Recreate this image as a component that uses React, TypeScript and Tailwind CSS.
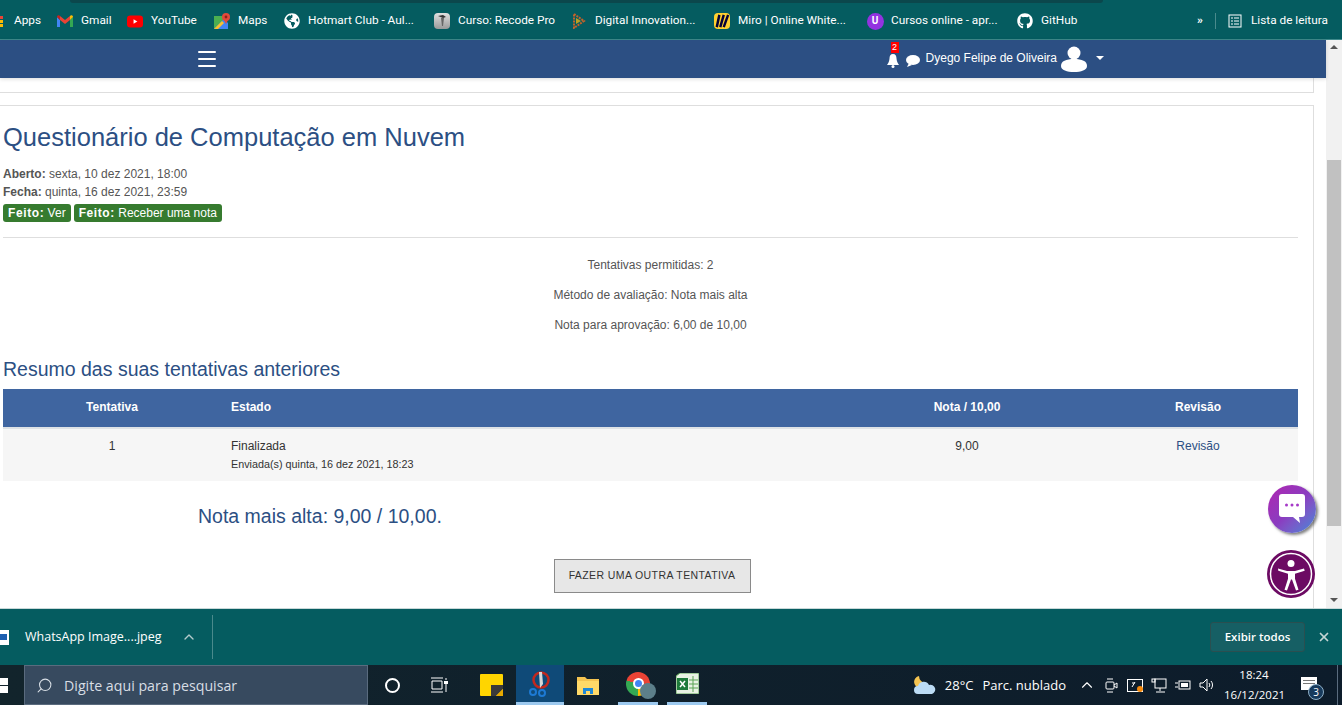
import { Menu, ChevronUp, X, Search } from 'lucide-react'
import { FaGithub, FaGlobeAmericas } from 'react-icons/fa'

const sans = "font-['Liberation_Sans',Arial,sans-serif]"

function GmailIcon() {
  return (
    <svg viewBox="0 0 16 12" className="w-4 h-3">
      <path d="M0 2v10h3V5z" fill="#4285f4" />
      <path d="M13 5v7h3V2z" fill="#34a853" />
      <path d="M3 5l5 4 5-4V1l-5 4-5-4z" fill="#ea4335" />
      <path d="M0 2l3 3V1L2 .3C1 -.2 0 .6 0 2z" fill="#c5221f" />
      <path d="M13 1v4l3-3c0-1.400-1-2.200-2-1.700z" fill="#fbbc04" />
    </svg>
  )
}

function YoutubeIcon() {
  return (
    <svg viewBox="0 0 17 13" className="w-[17px] h-[13px]">
      <rect width="17" height="13" rx="3.500" fill="#ff0000" />
      <path d="M7 4l4 2.500L7 9z" fill="white" />
    </svg>
  )
}

function MapsIcon() {
  return (
    <svg viewBox="0 0 16 16" className="w-4 h-4">
      <path d="M0 3h10v13H0z" fill="#4caf50" />
      <path d="M0 16L10 6l4 4v6z" fill="#4285f4" />
      <path d="M0 16l8-8 2 2-6 6z" fill="#fbc02d" />
      <circle cx="12" cy="4" r="4" fill="#e24a3b" />
      <path d="M9.500 6l2.500 5 2.500-5z" fill="#e24a3b" />
      <circle cx="12" cy="4" r="1.400" fill="#8e2118" />
    </svg>
  )
}

function RecodeIcon() {
  return (
    <div className="w-[16px] h-[16px] rounded-sm bg-gradient-to-b from-[#e0e0e0] to-[#9a9a9a] flex items-start justify-center pt-[2px]">
      <svg viewBox="0 0 8 12" className="w-[8px] h-[12px]">
        <path d="M0 1l5-1 3 2-3 1z" fill="#333" />
        <path d="M3 3h3l-1 8H4z" fill="#666" />
      </svg>
    </div>
  )
}

function DioIcon() {
  return (
    <svg viewBox="0 0 16 16" className="w-4 h-4">
      <path d="M3 1l10 7-10 7z" fill="none" stroke="#c2622a" strokeWidth="2" strokeDasharray="2 1" />
      <path d="M5 5l5 3-5 3z" fill="#b9a021" />
    </svg>
  )
}

function MiroIcon() {
  return (
    <div className="w-4 h-4 rounded-sm bg-[#ffd02f] flex items-center justify-center">
      <svg viewBox="0 0 16 16" className="w-[14px] h-[14px]">
        <path d="M5 1L2 15M10 1L6 15M15 1L10 15" stroke="#050038" strokeWidth="2.800" fill="none" />
      </svg>
    </div>
  )
}

function UdemyIcon() {
  return (
    <div className="w-[17px] h-[17px] shrink-0 rounded-full bg-[#9333e0] flex items-center justify-center text-white text-[10px] font-bold leading-none">
      U
    </div>
  )
}

function GridIcon() {
  return (
    <div className="w-[3px] flex flex-col gap-[1px]">
      <div className="h-[3px] bg-[#ea4335]" />
      <div className="h-[3px] bg-[#fbbc04]" />
      <div className="h-[3px] bg-[#fbbc04]" />
    </div>
  )
}

const bookmarks = [
  { name: 'Gmail', icon: <GmailIcon />, cls: 'w-[70px]' },
  { name: 'YouTube', icon: <YoutubeIcon />, cls: 'w-[87px]' },
  { name: 'Maps', icon: <MapsIcon />, cls: 'w-[70px]' },
  { name: 'Hotmart Club - Aul...', icon: <FaGlobeAmericas className="text-white w-4 h-4" />, cls: 'w-[150px]' },
  { name: 'Curso: Recode Pro', icon: <RecodeIcon />, cls: 'w-[137px]' },
  { name: 'Digital Innovation...', icon: <DioIcon />, cls: 'w-[143px]' },
  { name: 'Miro | Online White...', icon: <MiroIcon />, cls: 'w-[153px]' },
  { name: 'Cursos online - apr...', icon: <UdemyIcon />, cls: 'w-[150px]' },
  { name: 'GitHub', icon: <FaGithub className="text-white w-4 h-4" />, cls: 'w-[70px]' },
]

function BookmarksBar() {
  return (
    <div className="h-[40px] shrink-0 bg-[#055c60] border-b border-[#3f8a8c] flex flex-col text-white text-[11.800px] font-['Roboto',sans-serif]">
      <div className="h-[3px] ml-[70px] mr-[239px] bg-[#0b474c] rounded-b-md" />
      <div className="flex-1 flex items-center">
        <GridIcon />
        <span className="ml-[11px] w-[43px]">Apps</span>
        {bookmarks.map((b) => (
          <div key={b.name} className={`flex items-center gap-2 shrink-0 whitespace-nowrap ${b.cls}`}>
            <div className="w-4 flex justify-center shrink-0">{b.icon}</div>
            <span>{b.name}</span>
          </div>
        ))}
        <span className="ml-[110px] w-[18px] font-bold">»</span>
        <div className="w-px h-[16px] bg-[#4a8a8c]" />
        <svg viewBox="0 0 14 14" className="w-[14px] h-[14px] ml-3" fill="none" stroke="white">
          <rect x="1" y="1" width="12" height="12" />
          <path d="M3 4h2M6 4h5M3 7h2M6 7h5M3 10h2M6 10h5" />
        </svg>
        <span className="ml-[9px]">Lista de leitura</span>
      </div>
    </div>
  )
}

function UserIcon() {
  return (
    <svg viewBox="0 0 26 26" className="w-[26px] h-[26px]" fill="white">
      <circle cx="13" cy="7" r="6.500" />
      <path d="M0 20c0-5 5-7 13-7s13 2 13 7c0 4-6 6-13 6S0 24 0 20z" />
    </svg>
  )
}

function Navbar() {
  return (
    <div className="h-[38px] shrink-0 bg-[#2c4f83] flex items-center text-white shadow-[0_1px_4px_rgba(0,0,0,0.15)] relative z-10">
      <Menu className="w-[24px] h-[24px] ml-[195px]" strokeWidth={2} />
      <div className="ml-auto mr-[222px] flex items-center">
        <div className="relative">
          <svg viewBox="0 0 12 14" className="w-[12px] h-[14px] mt-[3px]" fill="white">
            <path d="M6 0c2.500 0 3.500 2 3.500 4.500S11 9.500 12 11H0c1-1.500 2.500-4 2.500-6.500S3.500 0 6 0z" />
            <circle cx="6" cy="12.500" r="1.500" />
          </svg>
          <span className={`absolute top-[-9px] left-[4px] w-[8px] h-[11px] bg-[#ff0000] text-[9px] leading-[11px] text-center ${sans}`}>2</span>
        </div>
        <svg viewBox="0 0 14 12" className="w-[14px] h-[12px] ml-[7px] mt-[3px]" fill="white">
          <ellipse cx="7" cy="5" rx="7" ry="5" />
          <path d="M3 8l-2 4 5-2z" />
        </svg>
        <span className={`ml-[6px] text-[12px] -mt-[2px] ${sans}`}>Dyego Felipe de Oliveira</span>
        <div className="ml-[4px]"><UserIcon /></div>
        <div className="ml-[9px] mb-[3px] border-x-[4px] border-x-transparent border-t-[4px] border-t-white" />
      </div>
    </div>
  )
}

function Badge({ action }: { action: string }) {
  return (
    <span className="h-[18px] leading-[18px] px-[5px] bg-[#367b2f] text-white rounded-[3px] text-[12px]">
      <b className="tracking-[0.6px]">Feito:</b> {action}
    </span>
  )
}

function Content() {
  return (
    <div className={`flex-1 min-h-0 bg-white overflow-hidden ${sans}`}>
      <div className="w-[1314px] h-[15px] border-b border-r border-[#dedede]" />
      <div className="w-[1314px] h-full mt-[12px] pt-[17px] pl-[3px] pr-[15px] border-t border-r border-[#dedede] text-[#555] text-[12px]">
        <h1 className="text-[25.500px] leading-[28px] text-[#2c4f83]">Questionário de Computação em Nuvem</h1>
        <div className="mt-[14px] leading-[18px]"><b>Aberto:</b> sexta, 10 dez 2021, 18:00</div>
        <div className="leading-[18px]"><b>Fecha:</b> quinta, 16 dez 2021, 23:59</div>
        <div className="flex gap-[3px] mt-[3px]">
          <Badge action="Ver" />
          <Badge action="Receber uma nota" />
        </div>
        <div className="h-px bg-[#dedede] mt-[15px]" />
        <div className="text-center leading-[18px] pt-[18px] flex flex-col gap-[12px]">
          <div>Tentativas permitidas: 2</div>
          <div>Método de avaliação: Nota mais alta</div>
          <div>Nota para aprovação: 6,00 de 10,00</div>
        </div>
        <h2 className="text-[19.500px] leading-[24px] text-[#2c4f83] mt-[23px]">Resumo das suas tentativas anteriores</h2>
        <div className="grid grid-cols-[218px_1fr_262px_200px] h-[38px] mt-[8px] pb-[2px] items-center bg-[#3f65a0] text-white font-bold">
          <div className="text-center">Tentativa</div>
          <div className="pl-[10px]">Estado</div>
          <div className="text-center">Nota / 10,00</div>
          <div className="text-center">Revisão</div>
        </div>
        <div className="grid grid-cols-[218px_1fr_262px_200px] h-[54px] pt-[8px] bg-[#f6f6f6] border-t-2 border-[#dee2e6] text-[#333] leading-[18px]">
          <div className="text-center">1</div>
          <div className="pl-[10px]">
            <div>Finalizada</div>
            <div className="text-[10.800px]">Enviada(s) quinta, 16 dez 2021, 18:23</div>
          </div>
          <div className="text-center">9,00</div>
          <div className="text-center text-[#2c4f83]">Revisão</div>
        </div>
        <div className="text-[19.500px] leading-[24px] text-[#2c4f83] mt-[23px] pl-[195px]">Nota mais alta: 9,00 / 10,00.</div>
        <div className="flex justify-center mt-[31px] pl-[3px]">
          <button className="w-[197px] h-[34px] bg-[#e7e7e7] border border-[#8a8a8a] text-[#333] text-[10.500px] tracking-[0.4px]">
            FAZER UMA OUTRA TENTATIVA
          </button>
        </div>
      </div>
    </div>
  )
}

function FloatingButtons() {
  return (
    <>
      <div className="absolute left-[1268px] top-[485px] w-[48px] h-[48px] rounded-full bg-gradient-to-br from-[#b01fb0] via-[#8a3cc0] to-[#2a86d8] shadow-[2px_2px_3px_rgba(0,0,0,0.5)] flex items-center justify-center">
        <svg viewBox="0 0 28 32" className="w-[28px] h-[32px]">
          <path d="M4 1h20a3 3 0 013 3v17a3 3 0 01-3 3h-3l1 6-7-6H4a3 3 0 01-3-3V4a3 3 0 013-3z" fill="white" />
          <circle cx="8.500" cy="12" r="1.500" fill="#a63ac8" />
          <circle cx="14" cy="12" r="1.500" fill="#a63ac8" />
          <circle cx="19.500" cy="12" r="1.500" fill="#a63ac8" />
        </svg>
      </div>
      <div className="absolute left-[1267px] top-[550px] w-[48px] h-[48px] rounded-full bg-[#6c0a63] flex items-center justify-center">
        <svg viewBox="0 0 44 44" className="w-[44px] h-[44px]" fill="white">
          <circle cx="22" cy="22" r="20.500" fill="none" stroke="white" strokeWidth="1.500" />
          <circle cx="22" cy="11.500" r="3.500" />
          <path d="M9 16.500l9 2.500h8l9-2.500.7 2.300-9.700 3v5l3.500 11-2.500.8-4-11h-1l-4 11-2.500-.8 3.500-11v-5l-9.700-3z" />
        </svg>
      </div>
    </>
  )
}

function Scrollbar() {
  return (
    <div className="w-[16px] shrink-0 bg-[#f1f1f1] flex flex-col items-center">
      <div className="mt-[5px] border-x-[4px] border-x-transparent border-b-[4px] border-b-[#555]" />
      <div className="w-[14px] h-[366px] bg-[#c1c1c1] mt-[111px]" />
      <div className="mt-auto mb-[6px] border-x-[4px] border-x-transparent border-t-[4px] border-t-[#555]" />
    </div>
  )
}

function DownloadBar() {
  return (
    <div className="h-[57px] shrink-0 bg-[#055c60] border-t border-[#c8d8d8] flex items-center text-white font-['Open_Sans',sans-serif] text-[12.500px]">
      <div className="w-[9px] h-[15px] bg-white flex items-center">
        <div className="w-[7px] h-[6px] bg-[#1d5fb0]" />
      </div>
      <span className="ml-[16px]">WhatsApp Image....jpeg</span>
      <ChevronUp className="w-[16px] h-[16px] ml-[19px] text-[#b5cccc]" />
      <div className="w-px h-[44px] bg-[#4a8a8c] ml-[15px]" />
      <button className="ml-auto w-[95px] h-[30px] bg-[#165f64] border border-[#2a4f50] rounded-[3px] text-[11.500px] font-semibold">
        Exibir todos
      </button>
      <X className="w-[14px] h-[14px] ml-[12px] mr-[11px] text-[#c5d5d5]" strokeWidth={3} />
    </div>
  )
}

function Taskbar() {
  return (
    <div className="h-[40px] shrink-0 bg-gradient-to-r from-[#12242c] to-[#0d1c2b] flex items-center text-white font-['Open_Sans',sans-serif]">
      <div className="w-[8px] h-[15px] grid grid-cols-1 gap-[1px]">
        <div className="bg-white" />
        <div className="bg-white" />
      </div>
      <div className="ml-[16px] w-[344px] h-[40px] bg-[#374a5f] border border-[#5a6b7e] flex items-center text-[14.200px] text-[#d7dee5]">
        <Search className="w-[17px] h-[17px] ml-[11px] -scale-x-100" strokeWidth={1.500} />
        <span className="ml-[11px] mt-[1px]">Digite aqui para pesquisar</span>
      </div>
      <div className="ml-[17px] w-[15px] h-[15px] rounded-full border-2 border-white" />
      <svg viewBox="0 0 18 16" className="w-[18px] h-[16px] ml-[30px]" fill="none" stroke="white">
        <path d="M1 1h12M1 15h12M2 4h10v8H2zM16 1v2M16 7v8" />
        <rect x="14.500" y="4.500" width="3" height="2" fill="white" />
      </svg>
      <svg viewBox="0 0 23 22" className="w-[23px] h-[22px] ml-[32px]">
        <rect width="23" height="22" rx="1" fill="#ffd500" />
        <path d="M23 11v4l-7 7h-5V11z" fill="#3a3a3a" />
        <path d="M23 15v7h-7z" fill="#e8a900" />
      </svg>
      <div className="ml-[13px] w-[48px] h-[40px] bg-[#0f4a78] border-b-[3px] border-[#9cc9ef] flex items-center justify-center">
        <svg viewBox="0 0 22 26" className="w-[22px] h-[26px]">
          <circle cx="12" cy="9" r="7.500" fill="none" stroke="#c2281e" strokeWidth="2.500" />
          <path d="M10 1h3l1 12-3 4z" fill="#d9d9d9" />
          <circle cx="4" cy="21" r="3" fill="none" stroke="#1d7ad4" strokeWidth="2" />
          <circle cx="13" cy="22" r="3" fill="none" stroke="#1d7ad4" strokeWidth="2" />
        </svg>
      </div>
      <svg viewBox="0 0 22 20" className="w-[22px] h-[20px] ml-[13px]">
        <path d="M0 2h8l2 2h12v16H0z" fill="#f5c451" />
        <path d="M0 6h22v14H0z" fill="#ffd968" />
        <path d="M6 19v-6h10v6h-3v-3H9v3z" fill="#1f88d6" />
      </svg>
      <div className="ml-[19px] w-[40px] h-[40px] border-b-[3px] border-[#9cc9ef] flex items-center justify-center">
        <div className="relative w-[24px] h-[24px] rounded-full bg-[conic-gradient(#ea4335_0_33%,#fbbc04_33%_50%,#34a853_50%_80%,#ea4335_80%_100%)] flex items-center justify-center">
          <div className="w-[11px] h-[11px] rounded-full bg-[#4285f4] border-2 border-white" />
          <div className="absolute right-[-6px] bottom-[-3px] w-[16px] h-[16px] rounded-full bg-[#5c7f8a]" />
        </div>
      </div>
      <div className="ml-[9px] w-[40px] h-[40px] border-b-[3px] border-[#9cc9ef] flex items-center justify-center">
        <svg viewBox="0 0 23 21" className="w-[23px] h-[21px]">
          <path d="M4 0h19v21H0V3z" fill="#e8f2e4" stroke="#5aa354" />
          <path d="M13 7h9M13 11h9M13 15h9M17 3v16" stroke="#5aa354" />
          <rect x="1" y="5" width="11" height="12" fill="#1d7a3a" />
          <path d="M4 8l5 6M9 8l-5 6" stroke="white" strokeWidth="1.500" />
        </svg>
      </div>
      <div className="ml-auto flex items-center text-[13px]">
        <svg viewBox="0 0 22 20" className="w-[22px] h-[20px]">
          <path d="M5 1a6 6 0 107 7 7 7 0 01-7-7z" fill="#f5c451" />
          <path d="M4 19a4 4 0 010-8 6 6 0 0111-1 4.500 4.500 0 013 9z" fill="#bcdcf5" />
        </svg>
        <span className="ml-[9px] mt-[2px]">28°C</span>
        <span className="ml-[9px] mt-[2px]">Parc. nublado</span>
        <ChevronUp className="w-[18px] h-[18px] ml-[12px]" strokeWidth={1.500} />
        <svg viewBox="0 0 13 15" className="w-[13px] h-[15px] ml-[9px]" fill="none" stroke="white">
          <rect x="1" y="4" width="8" height="7" rx="1" />
          <path d="M9 7l3-2v5l-3-2M2 1h6M2 14h6" />
        </svg>
        <svg viewBox="0 0 17 15" className="w-[17px] h-[15px] ml-[9px]" fill="none" stroke="white">
          <rect x=".5" y="1.500" width="15" height="12" />
          <path d="M5 9l3-5M5 5h3" />
          <circle cx="13" cy="11" r="3" fill="#f78a0c" stroke="none" />
        </svg>
        <svg viewBox="0 0 16 15" className="w-[16px] h-[15px] ml-[7px]" fill="none" stroke="white">
          <rect x="4" y="1" width="11" height="9" />
          <rect x="1" y="1" width="3" height="3" />
          <path d="M9 10v3M5 14h9" />
        </svg>
        <svg viewBox="0 0 16 12" className="w-[16px] h-[12px] ml-[8px]">
          <rect x="4" y="2" width="11" height="8" fill="none" stroke="white" />
          <rect x="6" y="4" width="7" height="4" fill="white" />
          <path d="M0 4h3M0 8h3" stroke="white" />
        </svg>
        <svg viewBox="0 0 15 14" className="w-[15px] h-[14px] ml-[8px]" fill="none" stroke="white">
          <path d="M1 5h3l4-4v12l-4-4H1zM10 5a3 3 0 010 4M12 3a6 6 0 010 8" />
        </svg>
        <div className="ml-[10px] w-[60px] text-center text-[11.500px] leading-[20px]">
          <div>18:24</div>
          <div>16/12/2021</div>
        </div>
        <div className="relative ml-[17px] mr-[20px] w-[16px] h-[13px] bg-white mb-[4px] flex flex-col gap-[2px] pt-[3px] px-[2px]">
          <div className="h-px bg-[#777]" />
          <div className="h-px bg-[#777]" />
          <div className="absolute left-[7px] top-[7px] w-[16px] h-[16px] rounded-full bg-[#173a5c] border border-[#8fb0c8] text-[10px] leading-[14px] text-center">3</div>
        </div>
        <div className="w-px h-[40px] bg-[#5a6b7e] mr-[4px]" />
      </div>
    </div>
  )
}

export default function App() {
  return (
    <div className="relative h-[705px] w-[1342px] flex flex-col overflow-hidden">
      <BookmarksBar />
      <div className="flex-1 min-h-0 flex">
        <div className="flex-1 min-w-0 flex flex-col">
          <Navbar />
          <Content />
        </div>
        <Scrollbar />
      </div>
      <FloatingButtons />
      <DownloadBar />
      <Taskbar />
    </div>
  )
}
